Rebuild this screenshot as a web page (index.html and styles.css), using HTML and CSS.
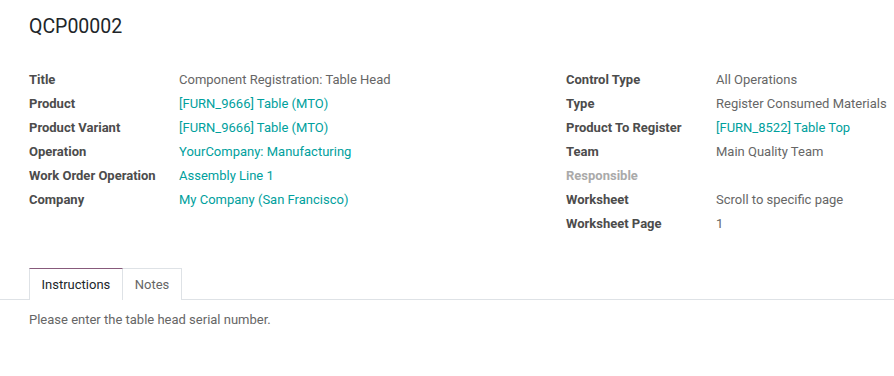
FILE: index.html
```html
<!DOCTYPE html>
<html>
<head>
<meta charset="utf-8">
<link rel="stylesheet" href="styles.css">
</head>
<body>
<div class="sheet">
  <h1 class="title">QCP00002</h1>
  <div class="groups">
    <div class="group">
      <div class="label">Title</div><div class="value">Component Registration: Table Head</div>
      <div class="label">Product</div><div class="value link">[FURN_9666] Table (MTO)</div>
      <div class="label">Product Variant</div><div class="value link">[FURN_9666] Table (MTO)</div>
      <div class="label">Operation</div><div class="value link">YourCompany: Manufacturing</div>
      <div class="label">Work Order Operation</div><div class="value link">Assembly Line 1</div>
      <div class="label">Company</div><div class="value link">My Company (San Francisco)</div>
    </div>
    <div class="group">
      <div class="label">Control Type</div><div class="value">All Operations</div>
      <div class="label">Type</div><div class="value">Register Consumed Materials</div>
      <div class="label">Product To Register</div><div class="value link">[FURN_8522] Table Top</div>
      <div class="label">Team</div><div class="value">Main Quality Team</div>
      <div class="label muted">Responsible</div><div class="value"></div>
      <div class="label">Worksheet</div><div class="value">Scroll to specific page</div>
      <div class="label">Worksheet Page</div><div class="value">1</div>
    </div>
  </div>
</div>
<div class="tabs">
  <div class="tab active">Instructions</div>
  <div class="tab">Notes</div>
</div>
<div class="tab-content">Please enter the table head serial number.</div>
</body>
</html>
```

FILE: styles.css
```css
html, body {
  margin: 0;
  padding: 0;
  background: #fff;
  font-family: Roboto, "Liberation Sans", sans-serif;
  font-size: 13px;
  color: #4c4c4c;
}
.sheet {
  padding: 0 0 0 29px;
}
.title {
  margin: 0;
  padding-top: 15px;
  font-size: 19.5px;
  line-height: 24px;
  font-weight: 400;
  color: #212529;
}
.groups {
  display: grid;
  grid-template-columns: 537px 1fr;
  margin-top: 28px;
}
.group {
  display: grid;
  grid-template-columns: 150px 1fr;
  grid-auto-rows: 24px;
  align-items: center;
  align-content: start;
}
.label {
  font-weight: 700;
  color: #4c4c4c;
  white-space: nowrap;
}
.label.muted {
  color: #aaaaaa;
}
.value {
  color: #666666;
  white-space: nowrap;
}
.value.link {
  color: #00a09d;
}
.tabs {
  display: flex;
  align-items: flex-end;
  margin-top: 33px;
  padding-left: 29px;
  border-bottom: 1px solid #dee2e6;
}
.tab {
  height: 31px;
  line-height: 32px;
  padding: 0 11.5px;
  color: #666666;
  border: 1px solid #dee2e6;
  border-bottom: none;
  margin-bottom: -1px;
  background: #fff;
}
.tab.active {
  border-top-color: #875a7b;
  color: #212529;
}
.tab + .tab {
  border-left: none;
  padding: 0 12px;
}
.tab-content {
  padding: 10px 29px 6px;
  line-height: 20px;
  color: #666666;
}
```
